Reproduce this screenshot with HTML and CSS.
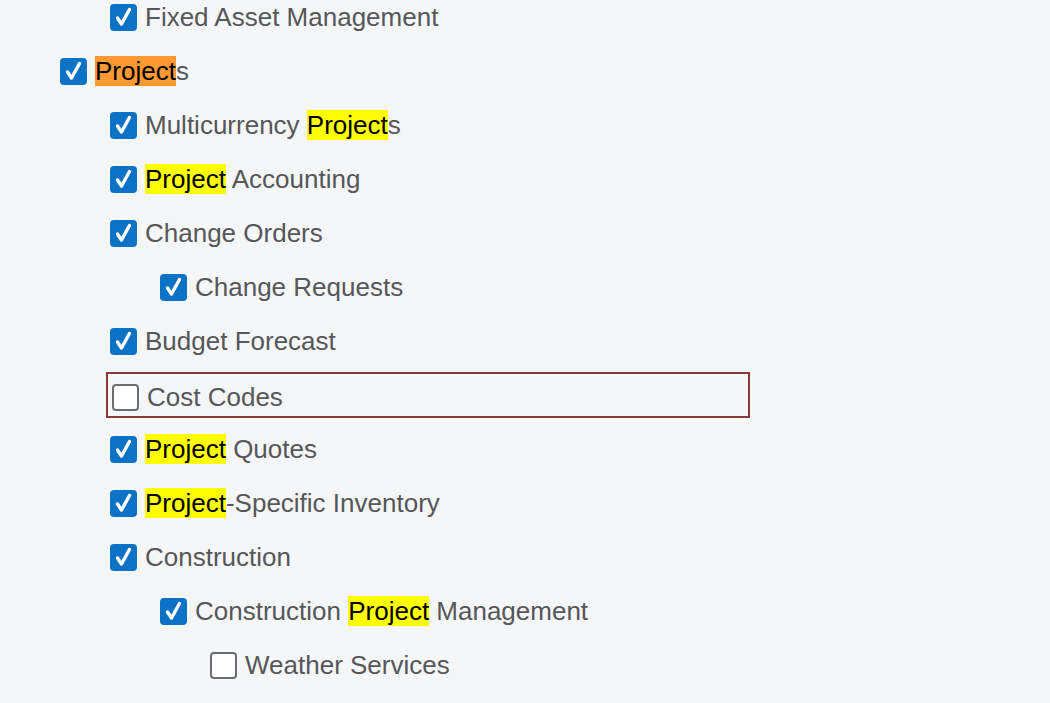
FILE: index.html
```html
<!DOCTYPE html>
<html>
<head>
<meta charset="utf-8">
<link rel="stylesheet" href="styles.css">
</head>
<body>
<ul class="tree">
  <li class="row l1"><span class="cb on"><svg viewBox="0 0 27 27"><path d="M7.5 14 L11.5 20 L19.5 5.5"/></svg></span><span class="lbl">Fixed Asset Management</span></li>
  <li class="row l0"><span class="cb on"><svg viewBox="0 0 27 27"><path d="M7.5 14 L11.5 20 L19.5 5.5"/></svg></span><span class="lbl"><mark class="cur">Project</mark>s</span></li>
  <li class="row l1"><span class="cb on"><svg viewBox="0 0 27 27"><path d="M7.5 14 L11.5 20 L19.5 5.5"/></svg></span><span class="lbl">Multicurrency <mark>Project</mark>s</span></li>
  <li class="row l1"><span class="cb on"><svg viewBox="0 0 27 27"><path d="M7.5 14 L11.5 20 L19.5 5.5"/></svg></span><span class="lbl"><mark>Project</mark> Accounting</span></li>
  <li class="row l1"><span class="cb on"><svg viewBox="0 0 27 27"><path d="M7.5 14 L11.5 20 L19.5 5.5"/></svg></span><span class="lbl">Change Orders</span></li>
  <li class="row l2"><span class="cb on"><svg viewBox="0 0 27 27"><path d="M7.5 14 L11.5 20 L19.5 5.5"/></svg></span><span class="lbl">Change Requests</span></li>
  <li class="row l1"><span class="cb on"><svg viewBox="0 0 27 27"><path d="M7.5 14 L11.5 20 L19.5 5.5"/></svg></span><span class="lbl">Budget Forecast</span></li>
  <li class="row l1 focus-wrap"><div class="focus"><span class="cb off"></span><span class="lbl">Cost Codes</span></div></li>
  <li class="row l1"><span class="cb on"><svg viewBox="0 0 27 27"><path d="M7.5 14 L11.5 20 L19.5 5.5"/></svg></span><span class="lbl"><mark>Project</mark> Quotes</span></li>
  <li class="row l1"><span class="cb on"><svg viewBox="0 0 27 27"><path d="M7.5 14 L11.5 20 L19.5 5.5"/></svg></span><span class="lbl"><mark>Project</mark>-Specific Inventory</span></li>
  <li class="row l1"><span class="cb on"><svg viewBox="0 0 27 27"><path d="M7.5 14 L11.5 20 L19.5 5.5"/></svg></span><span class="lbl">Construction</span></li>
  <li class="row l2"><span class="cb on"><svg viewBox="0 0 27 27"><path d="M7.5 14 L11.5 20 L19.5 5.5"/></svg></span><span class="lbl">Construction <mark>Project</mark> Management</span></li>
  <li class="row l3"><span class="cb off"></span><span class="lbl">Weather Services</span></li>
</ul>
</body>
</html>
```

FILE: styles.css
```css
html, body {
  margin: 0;
  padding: 0;
  background: #f5f6f8;
  overflow: hidden;
}
body {
  font-family: "Liberation Sans", Arial, sans-serif;
  font-size: 26px;
  color: #555759;
}
.tree {
  list-style: none;
  margin: -10px 0 0 0;
  padding: 0;
}
.row {
  height: 54px;
  display: flex;
  align-items: center;
}
.l0 { padding-left: 60px; }
.l1 { padding-left: 110px; }
.l2 { padding-left: 160px; }
.l3 { padding-left: 210px; }
.cb {
  width: 27px;
  height: 27px;
  box-sizing: border-box;
  border-radius: 4px;
  flex: none;
  display: flex;
  margin-right: 8px;
}
.cb.on {
  background: #0b72c6;
}
.cb.on svg {
  width: 27px;
  height: 27px;
}
.cb.on path {
  fill: none;
  stroke: #fff;
  stroke-width: 3.4;
  stroke-linecap: round;
  stroke-linejoin: round;
}
.cb.off {
  background: #fff;
  border: 2px solid #6b6d70;
}
.lbl {
  white-space: nowrap;
  line-height: 29px;
}
mark {
  background: #ffff00;
  color: #000;
}
mark.cur {
  background: #ff9933;
}
.focus-wrap {
  padding-left: 106px;
}
.focus {
  box-sizing: border-box;
  width: 644px;
  height: 46px;
  border: 2px solid #8b383d;
  padding: 4px 4px 0 4px;
  display: flex;
  align-items: center;
}
.focus .cb {
  margin-right: 8px;
}
```
